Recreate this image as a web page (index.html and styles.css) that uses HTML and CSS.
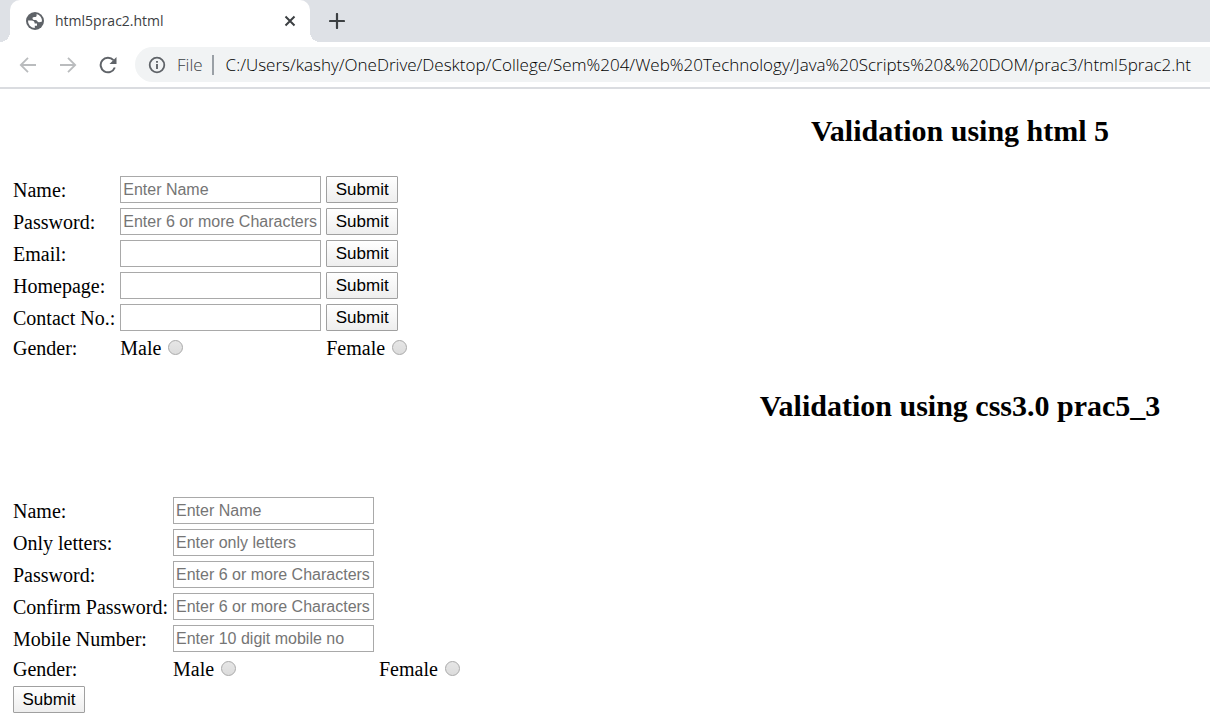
FILE: index.html
```html
<!DOCTYPE html>
<html lang="en">
<head>
<meta charset="utf-8">
<title>html5prac2.html</title>
<link rel="stylesheet" href="styles.css">
</head>
<body>
<header class="browser">
  <div class="tab-strip">
    <div class="tab">
      <svg class="globe" viewBox="0 0 18 18" width="18" height="18" aria-hidden="true">
        <circle cx="9" cy="9" r="9" fill="#5f6368"/>
        <path d="M2 8.500H5.500C7.500 8.500 8.700 9.600 8.700 11.400H11V13.800H8.800V16A7 7 0 0 1 2 8.500Z" fill="#fff"/>
        <path d="M10.600 2.100V3.500C10.600 4.700 9.600 5.200 8.200 5.100 6.700 5.100 6.300 6 6.600 7 7 8 8.200 8 9.600 8 11 8 11.300 9.900 12.600 10.200 13.800 10.400 14.800 9.700 16 9.400A7 7 0 0 0 10.600 2.100Z" fill="#fff"/>
      </svg>
      <span class="tab-title">html5prac2.html</span>
      <button class="icon-button" type="button" aria-label="Close tab">
        <svg viewBox="0 0 12 12" width="12" height="12"><path d="M1.500 1.500 10.500 10.500M10.500 1.500 1.500 10.500" stroke="#3c4043" stroke-width="2" fill="none"/></svg>
      </button>
    </div>
    <button class="icon-button new-tab" type="button" aria-label="New tab">
      <svg viewBox="0 0 16 16" width="16" height="16"><path d="M8 1V15M1 8H15" stroke="#3c4043" stroke-width="2.200" stroke-linecap="round"/></svg>
    </button>
  </div>
  <div class="toolbar">
    <button class="icon-button" type="button" aria-label="Back">
      <svg viewBox="0 0 18 18" width="18" height="18"><path d="M17 9H2M9 1.800 1.800 9 9 16.200" stroke="#babcbe" stroke-width="1.800" fill="none"/></svg>
    </button>
    <button class="icon-button" type="button" aria-label="Forward">
      <svg viewBox="0 0 18 18" width="18" height="18"><path d="M1 9H16M9 1.800 16.200 9 9 16.200" stroke="#babcbe" stroke-width="1.800" fill="none"/></svg>
    </button>
    <button class="icon-button" type="button" aria-label="Reload">
      <svg viewBox="0 0 18 18" width="18" height="18"><path d="M15.800 11.500A7.300 7.300 0 1 1 14.500 4.200" stroke="#5f6368" stroke-width="2" fill="none"/><path d="M17.500 1V8H10.500Z" fill="#5f6368"/></svg>
    </button>
    <div class="address">
      <svg class="info" viewBox="0 0 18 18" width="18" height="18" aria-hidden="true"><circle cx="9" cy="9" r="7.300" stroke="#5f6368" stroke-width="1.800" fill="none"/><path d="M9 8V13M9 5V6.800" stroke="#5f6368" stroke-width="1.900"/></svg>
      <span class="scheme">File</span>
      <span class="divider"></span>
      <span class="url">C:/Users/kashy/OneDrive/Desktop/College/Sem%204/Web%20Technology/Java%20Scripts%20&amp;%20DOM/prac3/html5prac2.ht</span>
    </div>
  </div>
</header>
<main class="page">
  <h2 class="title">Validation using html 5</h2>
  <form class="form">
    <table class="fields">
      <tr><td><label for="name">Name:</label></td><td><input class="field" id="name" type="text" placeholder="Enter Name"></td><td><button class="submit" type="submit">Submit</button></td></tr>
      <tr><td><label for="pw">Password:</label></td><td><input class="field" id="pw" type="password" placeholder="Enter 6 or more Characters"></td><td><button class="submit" type="submit">Submit</button></td></tr>
      <tr><td><label for="email">Email:</label></td><td><input class="field" id="email" type="email"></td><td><button class="submit" type="submit">Submit</button></td></tr>
      <tr><td><label for="home">Homepage:</label></td><td><input class="field" id="home" type="url"></td><td><button class="submit" type="submit">Submit</button></td></tr>
      <tr><td><label for="contact">Contact No.:</label></td><td><input class="field" id="contact" type="tel"></td><td><button class="submit" type="submit">Submit</button></td></tr>
      <tr><td>Gender:</td><td><label for="male">Male</label> <input class="radio" id="male" name="gender" type="radio"></td><td><label for="female">Female</label> <input class="radio" id="female" name="gender" type="radio"></td></tr>
    </table>
  </form>
  <h2 class="title">Validation using css3.0 prac5_3</h2>
  <form class="form form-css">
    <table class="fields">
      <tr><td><label for="name2">Name:</label></td><td><input class="field" id="name2" type="text" placeholder="Enter Name"></td></tr>
      <tr><td><label for="letters">Only letters:</label></td><td><input class="field" id="letters" type="text" placeholder="Enter only letters"></td></tr>
      <tr><td><label for="pw2">Password:</label></td><td><input class="field" id="pw2" type="password" placeholder="Enter 6 or more Characters"></td></tr>
      <tr><td><label for="confirm">Confirm Password:</label></td><td><input class="field" id="confirm" type="password" placeholder="Enter 6 or more Characters"></td></tr>
      <tr><td><label for="mobile">Mobile Number:</label></td><td><input class="field" id="mobile" type="tel" placeholder="Enter 10 digit mobile no"></td></tr>
      <tr><td>Gender:</td><td><label for="male2">Male</label> <input class="radio" id="male2" name="gender2" type="radio"></td><td><label for="female2">Female</label> <input class="radio" id="female2" name="gender2" type="radio"></td></tr>
      <tr><td><button class="submit" type="submit">Submit</button></td></tr>
    </table>
  </form>
</main>
</body>
</html>
```

FILE: styles.css
```css
* { box-sizing: border-box; }

body {
  margin: 0;
  background: #fff;
  color: #000;
  font-family: "Liberation Serif", "Times New Roman", serif;
  font-size: 20px;
  line-height: 24px;
  overflow: hidden;
}

.browser {
  font-family: "Open Sans", "Noto Sans", sans-serif;
  border-bottom: 2px solid #dadce0;
}

.tab-strip {
  display: flex;
  align-items: center;
  height: 42px;
  padding-left: 10px;
  background: #dee1e6;
}

.tab {
  position: relative;
  display: flex;
  align-items: center;
  width: 300px;
  height: 42px;
  padding: 0 14px 0 16px;
  background: #fff;
  border-radius: 10px 10px 0 0;
}

.tab::before,
.tab::after {
  content: "";
  position: absolute;
  bottom: 0;
  width: 10px;
  height: 10px;
}

.tab::before {
  right: 100%;
  background: radial-gradient(circle at 0 0, #dee1e6 10px, #fff 10px);
}

.tab::after {
  left: 100%;
  background: radial-gradient(circle at 100% 0, #dee1e6 10px, #fff 10px);
}

.tab-title {
  flex: 1;
  margin-left: 11px;
  font-size: 14px;
  color: #3c4043;
}

.icon-button {
  display: flex;
  padding: 0;
  border: 0;
  background: none;
}

.new-tab { margin-left: 19px; }

.toolbar {
  display: flex;
  align-items: center;
  gap: 22px;
  height: 45px;
  padding-left: 19px;
}

.address {
  flex: 1;
  display: flex;
  align-items: center;
  min-width: 0;
  height: 35px;
  margin-left: -4px;
  padding-left: 13px;
  overflow: hidden;
  border-radius: 18px 0 0 18px;
  background: #f1f3f4;
  font-size: 17px;
  font-weight: 300;
  white-space: nowrap;
}

.info { flex: none; }

.scheme {
  margin-left: 11px;
  color: #3c4043;
}

.divider {
  flex: none;
  width: 2px;
  height: 20px;
  margin: 0 12px 0 9px;
  background: #9aa0a6;
}

.url { color: #000; }

.page { padding: 25px 0 6px; }

.title {
  margin: 0;
  padding-left: 710px;
  text-align: center;
  font-size: 30px;
  line-height: 34px;
}

.form { padding: 24px 0 25px 10px; }

.form-css { padding: 70px 0 0 10px; }

.fields { border-spacing: 3px; margin-left: -1px; }

.fields td { padding: 1px; }

.field,
.submit {
  display: block;
  height: 27px;
  font-family: "Liberation Sans", Arial, sans-serif;
}

.field {
  width: 201px;
  padding: 1px 2px;
  border: 1px solid #a9a9a9;
  background: #fff;
  font-size: 16px;
}

.field::placeholder { color: #757575; }

.submit {
  width: 72px;
  padding: 0;
  border: 1px solid #a0a0a0;
  border-radius: 1px;
  background: linear-gradient(#fff, #eee);
  color: #000;
  font-size: 17px;
}

.radio {
  appearance: none;
  width: 15px;
  height: 15px;
  margin: 0 5px 0 2px;
  border: 1px solid #a9a9a9;
  border-radius: 50%;
  background: linear-gradient(#e6e6e6, #dcdcdc);
}
```
